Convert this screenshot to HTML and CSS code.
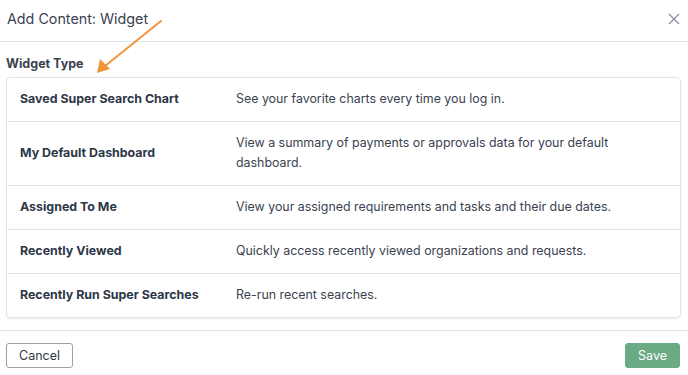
FILE: index.html
```html
<!DOCTYPE html>
<html lang="en">
<head>
  <meta charset="UTF-8">
  <title>Add Content: Widget</title>
  <link rel="stylesheet" href="styles.css">
</head>
<body>
  <div class="modal">
    <header class="modal-head">
      <h1>Add Content: Widget</h1>
      <button class="close" aria-label="Close">
        <svg width="12" height="12" viewBox="0 0 12 12"><path d="M1 1L11 11M11 1L1 11" stroke="#8a929e" stroke-width="1.4" fill="none"/></svg>
      </button>
    </header>
    <section class="modal-body">
      <h2>Widget Type</h2>
      <table class="types">
        <tr><th>Saved Super Search Chart</th><td>See your favorite charts every time you log in.</td></tr>
        <tr><th>My Default Dashboard</th><td>View a summary of payments or approvals data for your default dashboard.</td></tr>
        <tr><th>Assigned To Me</th><td>View your assigned requirements and tasks and their due dates.</td></tr>
        <tr><th>Recently Viewed</th><td>Quickly access recently viewed organizations and requests.</td></tr>
        <tr><th>Recently Run Super Searches</th><td>Re-run recent searches.</td></tr>
      </table>
    </section>
    <footer class="modal-foot">
      <button class="btn">Cancel</button>
      <button class="btn primary">Save</button>
    </footer>
    <svg class="arrow" width="80" height="70" viewBox="0 0 80 70">
      <path d="M69 13L13 58" stroke="#f0953b" stroke-width="2" stroke-linecap="round" fill="none"/>
      <path d="M5 65L8 51L18 61Z" fill="#f0953b"/>
    </svg>
  </div>
</body>
</html>
```

FILE: styles.css
```css
*{margin:0;padding:0;box-sizing:border-box}
body{font-family:'Inter',sans-serif;background:#fff;color:#2d3748;width:688px;height:375px;overflow:hidden}
.modal{position:relative;height:375px}
.modal-head{height:42px;border-bottom:1px solid #e2e4e8;display:flex;align-items:center;justify-content:space-between;padding:0 8px 4px 7px}
.modal-head h1{font-size:14.3px;font-weight:400;color:#3a4250}
.close{background:none;border:none;display:flex;padding:0;margin-top:0}
.modal-body{padding:14px 7px 12px 6px}
.modal-body h2{font-size:12.5px;font-weight:700;color:#3a4250;margin-bottom:6px}
.types{width:100%;border-collapse:separate;border-spacing:0;border:1px solid #e2e4e8;border-radius:4px;box-shadow:0 1px 2px rgba(0,0,0,0.08);font-size:12.4px;line-height:20px}
.types th,.types td{text-align:left;vertical-align:middle;padding:11px 13px 12px;border-top:1px solid #e2e4e8}
.types tr:first-child th,.types tr:first-child td{border-top:none}
.types th{width:216px;font-weight:700;color:#2d3748}
.types td{color:#3a4250;padding-right:40px}
.modal-foot{border-top:1px solid #e2e4e8;display:flex;justify-content:space-between;padding:12px 8px 0 6px}
.btn{font-family:'Inter',sans-serif;font-size:12.5px;height:25px;padding:0 12px;border:1px solid #9aa1ab;border-radius:3px;background:#fff;color:#2d3748}
.btn.primary{background:#6aaa84;border-color:#6aaa84;color:#fff;padding:0 12px}
.arrow{position:absolute;left:92px;top:8px}
```
